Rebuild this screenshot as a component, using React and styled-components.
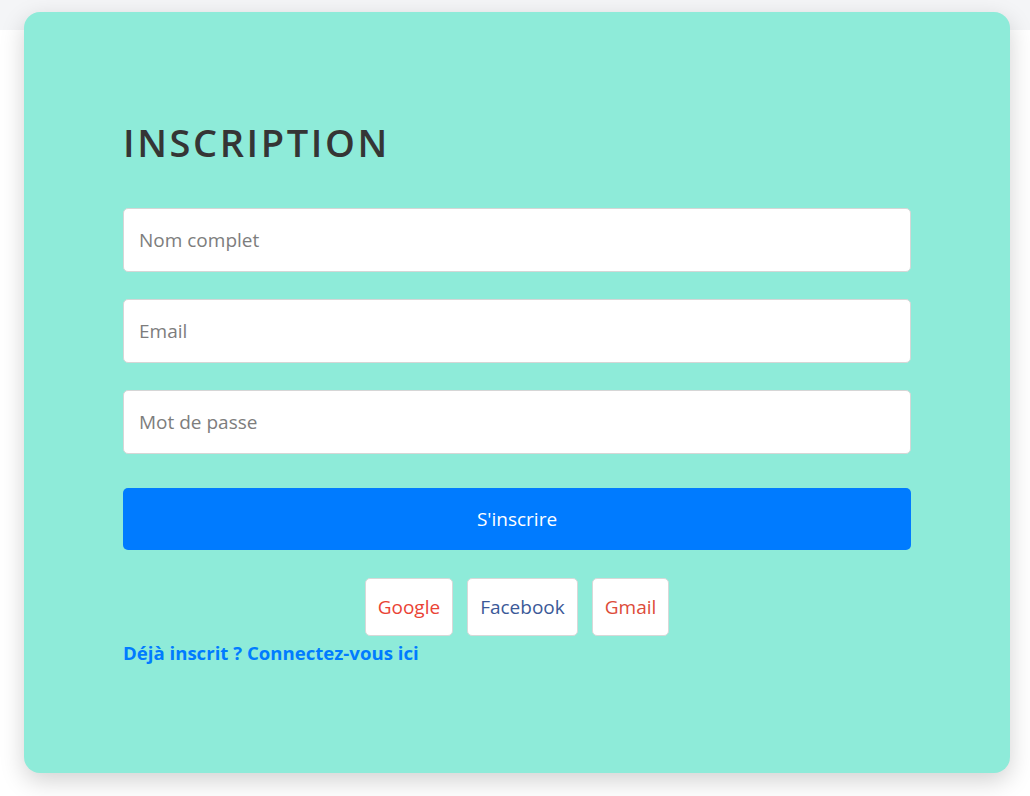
import React from "react";
import styled, { createGlobalStyle } from "styled-components";

const Global = createGlobalStyle`
  html, body { margin: 0; padding: 0; }
  body {
    background: linear-gradient(#f4f5f7 0, #f4f5f7 30px, #ffffff 30px);
    font-family: "Open Sans", "Noto Sans", sans-serif;
    min-height: 796px;
  }
  * { box-sizing: border-box; }
`;

const Page = styled.div`
  padding: 12px 20px 0 24px;
`;

const Card = styled.div`
  width: 986px;
  height: 761px;
  background: #8eebd9;
  border-radius: 16px;
  box-shadow: 0 8px 24px rgba(0, 0, 0, 0.18);
  padding: 102px 99px 0;
  display: flex;
  flex-direction: column;
`;

const Title = styled.h1`
  margin: 0 0 38px;
  font-family: "Open Sans", sans-serif;
  font-weight: 600;
  font-size: 38px;
  line-height: 56px;
  letter-spacing: 2.6px;
  color: #353535;
`;

const Input = styled.input`
  width: 100%;
  height: 64px;
  border: 1px solid #d6d6d6;
  border-radius: 5px;
  background: #fff;
  padding: 0 15px;
  margin-bottom: 27px;
  font-family: "Open Sans", sans-serif;
  font-size: 19px;
  color: #333;
  outline: none;
  &::placeholder { color: #7d7d7d; }
`;

const Submit = styled.button`
  width: 100%;
  height: 62px;
  margin-top: 7px;
  border: none;
  border-radius: 5px;
  background: #007bff;
  color: #fff;
  font-family: "Open Sans", sans-serif;
  font-size: 19px;
  cursor: pointer;
`;

const Socials = styled.div`
  display: flex;
  justify-content: center;
  gap: 14px;
  margin-top: 28px;
`;

const Social = styled.button`
  height: 58px;
  padding: 0 12px;
  background: #fff;
  border: 1px solid #d8d8d8;
  border-radius: 5px;
  font-family: "Open Sans", sans-serif;
  font-size: 19px;
  color: ${(p) => p.$color};
  cursor: pointer;
`;

const LoginLink = styled.a`
  align-self: flex-start;
  margin-top: 4px;
  font-family: "Open Sans", sans-serif;
  font-weight: 700;
  font-size: 18.6px;
  color: #007bff;
  text-decoration: none;
`;

export default function App() {
  return (
    <>
      <Global />
      <Page>
        <Card>
          <Title>INSCRIPTION</Title>
          <Input placeholder="Nom complet" />
          <Input placeholder="Email" type="email" />
          <Input placeholder="Mot de passe" type="password" />
          <Submit>S'inscrire</Submit>
          <Socials>
            <Social $color="#ea4335">Google</Social>
            <Social $color="#3b5998">Facebook</Social>
            <Social $color="#dd4b39">Gmail</Social>
          </Socials>
          <LoginLink href="#">Déjà inscrit ? Connectez-vous ici</LoginLink>
        </Card>
      </Page>
    </>
  );
}
